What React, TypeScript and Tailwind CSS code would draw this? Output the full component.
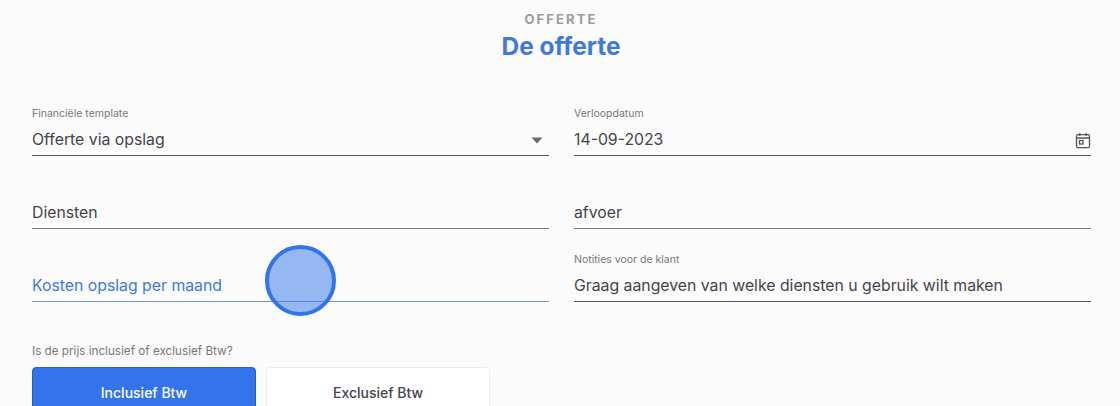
import React from 'react';

const Field = ({ label, value, blue, soft, children }: { label?: string; value: string; blue?: boolean; soft?: boolean; children?: React.ReactNode }) => (
  <div className="h-[73px] flex flex-col justify-end">
    {label && <div className="text-[10.5px] leading-[14px] text-[#77777d] mb-[8px]">{label}</div>}
    <div className={`flex items-center justify-between h-[27px] pb-[5px] border-b ${blue ? 'border-[#6f93d6]' : soft ? 'border-[#77777d]' : 'border-[#55555c]'}`}>
      <span className={`text-[15.8px] leading-[22px] ${blue ? 'text-[#3f7ad8]' : 'text-[#44444c]'}`}>{value}</span>
      {children}
    </div>
  </div>
);

export default function App() {
  return (
    <div className="relative w-[1120px] h-[406px] overflow-hidden bg-[#fbfbfb] font-['Inter',sans-serif]">
      <div className="flex flex-col items-center pt-[12px] pl-[2px]">
        <div className="text-[13px] leading-[15px] font-bold tracking-[2.1px] text-[#9b9ba1]">OFFERTE</div>
        <h1 className="mt-[3px] text-[24.4px] leading-[32px] font-bold text-[#3f7ad8]">De offerte</h1>
      </div>
      <div className="grid grid-cols-[517px_517px] gap-x-[25px] pl-[32px] mt-[21px]">
        <Field label="Financiële template" value="Offerte via opslag">
          <svg width="12" height="7" viewBox="0 0 12 7" className="mr-[6px] mt-[1px]"><path d="M0.5 0.5h11L6 6.5z" fill="#6b6b72" /></svg>
        </Field>
        <Field label="Verloopdatum" value="14-09-2023">
          <svg width="16" height="17" viewBox="0 0 16 17" fill="none" stroke="#55555c" strokeWidth="1.3" className="mt-[1px]">
            <rect x="1.5" y="2.7" width="13" height="13" rx="1.5" />
            <path d="M1.5 6h13M4.8 1v3M11.2 1v3" />
            <rect x="4.5" y="8.5" width="3.5" height="3.5" />
          </svg>
        </Field>
        <Field value="Diensten" soft />
        <Field value="afvoer" soft />
        <Field value="Kosten opslag per maand" blue />
        <Field label="Notities voor de klant" value="Graag aangeven van welke diensten u gebruik wilt maken" />
      </div>
      <div className="pl-[32px] mt-[42px]">
        <div className="text-[11.7px] leading-[14px] text-[#77777d] mb-[9px]">Is de prijs inclusief of exclusief Btw?</div>
        <div className="flex gap-[10px]">
          <button className="w-[224px] h-[50px] rounded-[4px] bg-[#3374ec] border border-[#2a5fc4] text-white text-[14px] font-medium">Inclusief Btw</button>
          <button className="w-[224px] h-[50px] rounded-[4px] bg-white border border-[#ececee] text-[#44444c] text-[14px] font-medium">Exclusief Btw</button>
        </div>
      </div>
      <div className="absolute left-[265px] top-[245px] w-[71px] h-[71px] rounded-full bg-[#3374ec]/50 border-[4px] border-[#3374ec]" />
    </div>
  );
}
